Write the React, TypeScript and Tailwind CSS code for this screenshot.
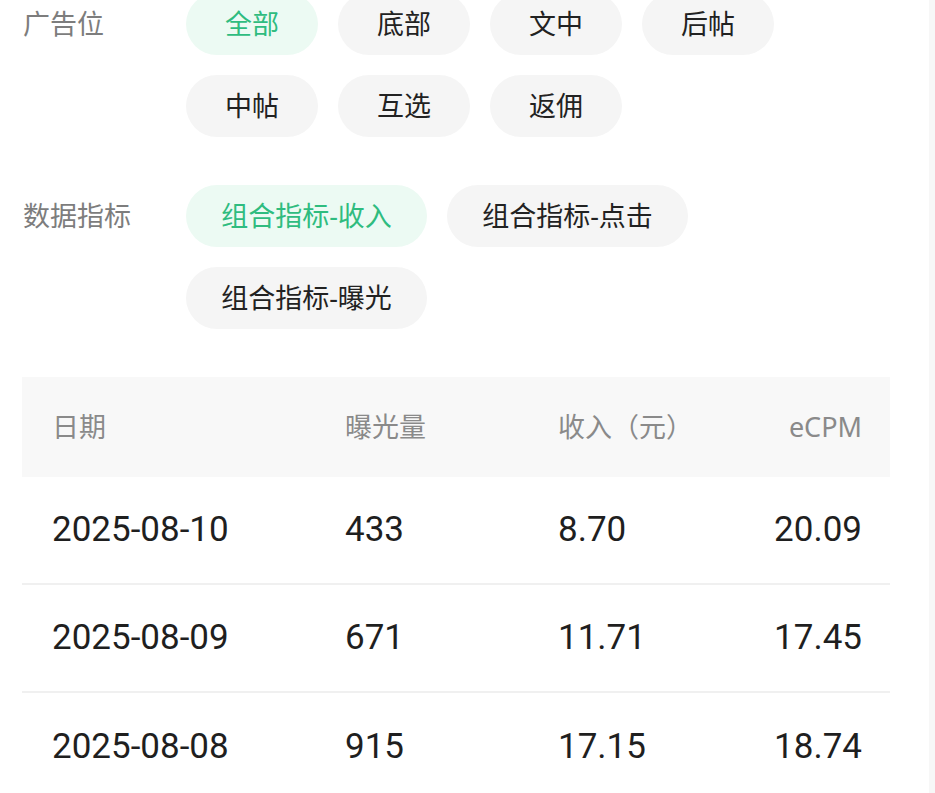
const slots = ["全部", "底部", "文中", "后帖", "中帖", "互选", "返佣"];
const metrics = ["组合指标-收入", "组合指标-点击", "组合指标-曝光"];

const rows = [
  { date: "2025-08-10", views: "433", income: "8.70", ecpm: "20.09" },
  { date: "2025-08-09", views: "671", income: "11.71", ecpm: "17.45" },
  { date: "2025-08-08", views: "915", income: "17.15", ecpm: "18.74" },
];

const font = { fontFamily: '"Noto Sans", "Noto Sans CJK SC", sans-serif' };

function Chip({ label, active, wide }: { label: string; active?: boolean; wide?: boolean }) {
  return (
    <div
      className={`h-[62px] rounded-full flex items-center justify-center text-[27px] ${
        wide ? "w-[241px]" : "w-[132px]"
      } ${active ? "bg-[#ecfaf3] text-[#2fbc7f]" : "bg-[#f5f5f5] text-[#222222]"}`}
    >
      {label}
    </div>
  );
}

function FilterGroup({
  title,
  items,
  activeIndex,
  wide,
}: {
  title: string;
  items: string[];
  activeIndex: number;
  wide?: boolean;
}) {
  return (
    <div className="flex shrink-0">
      <div className="w-[186px] pl-[23px] h-[62px] flex items-center text-[27px] text-[#7d7d7d] shrink-0">
        {title}
      </div>
      <div className="flex flex-wrap gap-x-[20px] gap-y-[20px] w-[620px]">
        {items.map((it, i) => (
          <Chip key={it} label={it} active={i === activeIndex} wide={wide} />
        ))}
      </div>
    </div>
  );
}

export default function App() {
  return (
    <div className="w-[935px] h-[793px] overflow-hidden bg-white flex" style={font}>
      <div className="flex-1 flex flex-col mt-[-7px]">
        <FilterGroup title="广告位" items={slots} activeIndex={0} />
        <div className="h-[48px] shrink-0" />
        <FilterGroup title="数据指标" items={metrics} activeIndex={0} wide />

        <div className="ml-[22px] mr-[39px] mt-[48px] shrink-0">
          <div className="bg-[#f8f8f8] h-[100px] grid grid-cols-[293px_213px_1fr_auto] items-center pl-[30px] pr-[28px] text-[27px] text-[#8a8a8a]">
            <span>日期</span>
            <span>曝光量</span>
            <span>收入（元）</span>
            <span className="text-right">eCPM</span>
          </div>
          {rows.map((r, i) => (
            <div
              key={r.date}
              className={`h-[108px] grid grid-cols-[293px_213px_1fr_auto] items-center pl-[30px] pr-[28px] text-[35px] text-[#1f1f1f] ${
                i < rows.length - 1 ? "border-b-2 border-[#f0f0f0]" : ""
              }`}
              style={{ fontFamily: 'Roboto, "Noto Sans", sans-serif' }}
            >
              <span>{r.date}</span>
              <span>{r.views}</span>
              <span>{r.income}</span>
              <span className="text-right">{r.ecpm}</span>
            </div>
          ))}
        </div>
      </div>
      <div className="w-[6px] bg-[#f7f7f7]" />
    </div>
  );
}
